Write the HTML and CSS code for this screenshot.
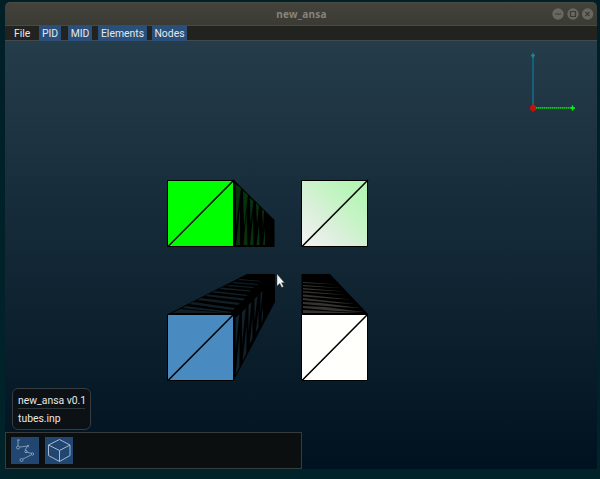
FILE: index.html
```html
<!DOCTYPE html>
<html lang="en">
<head>
<meta charset="utf-8">
<title>new_ansa</title>
<link rel="stylesheet" href="styles.css">
</head>
<body>
<main class="window">
  <header class="titlebar">
    <span class="title">new_ansa</span>
    <div class="controls">
      <svg width="42" height="12" viewBox="0 0 42 12" fill="none" stroke="#3b3a34" stroke-width="1.2">
        <g fill="#686761" stroke="none"><circle cx="6" cy="6" r="5.7"/><circle cx="21" cy="6" r="5.7"/><circle cx="35.6" cy="6" r="5.7"/></g>
        <path d="M3 6h6M18.500 3.500h5v5h-5zM33.500 4l4 4m0-4l-4 4"/>
      </svg>
    </div>
  </header>
  <nav class="menu">
    <a class="file">File</a><a class="item pid">PID</a><a class="item mid">MID</a><a class="item elements">Elements</a><a class="item nodes">Nodes</a>
  </nav>
  <section class="viewport">
    <svg class="scene" viewBox="5 41 592 428">
      <defs>
        <linearGradient id="mint" x1="0" y1="1" x2="1" y2="0">
          <stop offset="0" stop-color="#f4f4f4"/><stop offset=".35" stop-color="#dcefdc"/><stop offset=".65" stop-color="#c3f4c3"/><stop offset="1" stop-color="#aff5af"/>
        </linearGradient>
      </defs>
      <path d="M533 56V107" stroke="#17647f" stroke-width="1.8"/>
      <path d="M533 53v5M531 55.500h4" stroke="#16879a" stroke-width="1.400"/>
      <path d="M534 107.800H573" stroke="#159d2c" stroke-width="1.200"/>
      <path d="M534 107.800H573" stroke="#12e312" stroke-width="1.200" stroke-dasharray="1 1"/>
      <path d="M572.500 105.500v5M571 108h4" stroke="#00ff14" stroke-width="1.400"/>
      <path d="M532 104.500h2l2 2v3l-2 2h-2l-2-2v-3z" fill="#c51208"/>

      <path d="M234 180L274.500 220V247H234z" fill="#000"/>
      <path d="M235.500 184L241 188 236 227zM240 207l-4 38h4zM243 191l5 4-4 32zM246.500 212l-3 33h4zM250 198l3.500 3-3 22zM253 215l-3 30h3.500zM256 203l3 3-2 18zM259 224l-2.500 21h3zM262 209l2 2-1 17zM265 228l-2 17h2z" fill="#07330c"/>
      <path d="M167.500 180.500H233.500V246.500H167.500z" fill="#0f0" stroke="#000"/>
      <path d="M168 246.500L234 180" stroke="#000" stroke-width="1.600"/>

      <path d="M301.500 180.500H367.500V246.500H301.500z" fill="url(#mint)" stroke="#000"/>
      <path d="M302 246.500L368 180" stroke="#000" stroke-width="1.600"/>

      <path d="M168 314L247 274H275V302L234 380H168z" fill="#000"/>
      <path d="M172 313l8-4 48 4zM182 308l4-2 46 6-2 1zM189 304l4-2 42 6-2 2zM197 300l4-2 39 5-2 2zM205 296l3-1.500 37 4-2 2zM212 292.500l3-1.500 33 4-2 1zM219 289l3-1.500 29 3-1 1zM226 286l3-1 25 2-1 1zM232 283l2-1 24 2-1 1zM238 280l2-1 21 2-1 .5z" fill="#111e25"/>
      <path d="M235.500 318l4-4-4 37zM239.500 333l-4 42 4-8zM242 312l4-4-4 36zM246.500 325l-4 36 4-8zM248.500 305l3-3-3 30zM252.500 316l-3 29 3-7zM254.500 299l3-3-3 26zM258.500 311l-3 22 3-6zM260.500 293l2-2-2 22zM263 306l-2 17 2-5z" fill="#10212a"/>
      <path d="M167.500 314.500H233.500V380.500H167.500z" fill="#498bc1" stroke="#000"/>
      <path d="M168 380.500L234 314" stroke="#000" stroke-width="1.600"/>
      <path d="M234 314L275 274" stroke="#000"/>

      <path d="M301.500 314V274H330L368 314z" fill="#000"/>
      <path d="M303 310l58 3H303zM303 306l22 1 39 5-28-1-33-3zM303 302l18 1 39 5-22-1-35-3zM303 298l52 6-20-1-32-3zM303 294.500l48 5-20-1-28-2zM303 291l44 4-20-1-24-1.500zM303 288l41 3.500-41-2zM303 285l38 3-38-1.800zM303 282l35 2.500-35-1.500z" fill="#353430"/>
      <path d="M301.500 314.500H367.500V380.500H301.500z" fill="#fffffc" stroke="#000"/>
      <path d="M302 380.500L368 314" stroke="#000" stroke-width="1.600"/>

      <path d="M277 274V286L279.800 283.500 281.800 287.500 283.500 286.500 281.500 282.700H284.500z" fill="#f4f4f4" stroke="#333" stroke-width=".4"/>
    </svg>
    <div class="overlay">
      <div class="info"><div class="name">new_ansa v0.1</div><div class="filename">tubes.inp</div></div>
      <div class="toolbar">
        <button class="tool" aria-label="Nodes">
          <svg width="28" height="27" viewBox="0 0 28 27" fill="none" stroke="#8aa2bc" stroke-width=".9">
            <path d="M6 3h3M7 3v6M9 10l8-1M16 10l-2 3M15 15l6 1.500M20 18l-8 4"/><circle cx="7" cy="10.500" r="1.500"/><circle cx="17" cy="9" r=".8"/><circle cx="15" cy="14.500" r="1.200"/><circle cx="21.500" cy="17" r="1.200"/><circle cx="10.500" cy="23" r="1.500"/>
          </svg>
        </button>
        <button class="tool" aria-label="Elements">
          <svg width="28" height="27" viewBox="0 0 28 27" fill="none" stroke="#a4b9ce" stroke-width="1">
            <path d="M14.500 2.500L25 8V18.500L14.500 24.500 3.500 18.500V8zM3.500 8l11 5.500L25 8M14.500 13.500v11"/>
          </svg>
        </button>
      </div>
    </div>
  </section>
</main>
</body>
</html>
```
FILE: styles.css
```css
* { box-sizing: border-box; }
body {
  margin: 0;
  height: 479px;
  padding: 2px 3px 10px 5px;
  overflow: hidden;
  background: linear-gradient(#001f27, #00232a);
  font: 10.4px/15px Roboto, sans-serif;
  color: #e8e8e8;
}
.window { height: 467px; display: flex; flex-direction: column; }
.titlebar {
  height: 23px;
  display: grid;
  grid-template-columns: 1fr auto 1fr;
  align-items: center;
  padding: 0 3px 0 4px;
  border-top: 1px solid #4c4c45;
  border-radius: 5px 5px 0 0;
  background: linear-gradient(#43423b, #3b3b35);
}
.title {
  grid-column: 2;
  color: #85847d;
  font: bold 10px/15px "Noto Sans", sans-serif;
  letter-spacing: .25px;
}
.controls { justify-self: end; height: 12px; }
.controls svg { display: block; }
.menu {
  height: 16px;
  display: flex;
  padding-left: 9px;
  background: #22221f;
  border-top: 1px solid #484a47;
  border-bottom: 1px solid #414a4c;
}
.menu a { height: 15px; line-height: 15px; text-align: center; white-space: nowrap; }
.file { width: 16px; }
.item { margin-left: 6px; background: #294f7a; }
.pid { width: 22px; margin-left: 9px; }
.mid { width: 24px; margin-left: 7px; }
.elements { width: 49px; }
.nodes { width: 35px; margin-left: 5px; }
.viewport {
  flex: 1;
  display: grid;
  background: linear-gradient(#253c4a, #001220);
}
.scene { grid-area: 1 / 1; width: 592px; height: 428px; display: block; }
.overlay { grid-area: 1 / 1; align-self: end; z-index: 1; }
.info {
  width: 79px;
  height: 42px;
  margin: 0 0 2px 7px;
  padding: 4px 5px;
  border: 1px solid #363c3f;
  border-radius: 6px;
  background: #0b1114;
  white-space: nowrap;
}
.name { height: 16px; border-bottom: 1px solid #30373a; }
.filename { padding-top: 2px; }
.toolbar {
  display: flex;
  gap: 6px;
  width: 297px;
  height: 37px;
  padding: 4px 5px;
  border: 1px solid #383b3b;
  background: #0c0f0f;
}
.tool { width: 28px; height: 27px; padding: 0; border: 0; background: #214672; }
.tool svg { display: block; }
```
